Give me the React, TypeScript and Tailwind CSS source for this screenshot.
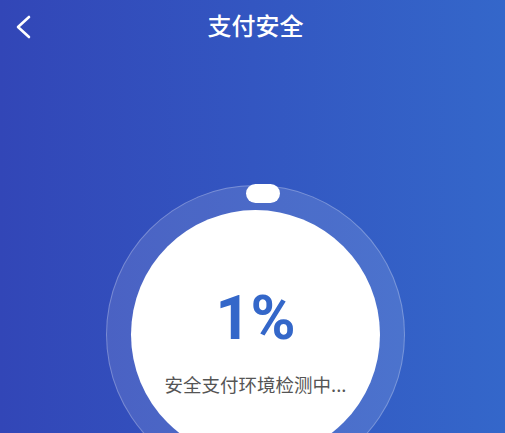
export default function App() {
  return (
    <div
      className="relative h-[433px] w-[505px] overflow-hidden bg-[linear-gradient(90deg,#3246b7_0%,#3356c1_50%,#3467ca_100%)]"
      style={{ fontFamily: '"Noto Sans CJK SC", "Noto Sans", sans-serif' }}
    >
      {/* Header */}
      <div className="relative flex h-[50px] items-center justify-center pl-[6px]">
        <button className="absolute left-[12px] top-[12px] p-[2px]">
          <svg width="20" height="26" viewBox="0 0 20 26" fill="none">
            <polyline
              points="15,3 4,13 15,23"
              stroke="white"
              strokeWidth="2.6"
              strokeLinecap="round"
              strokeLinejoin="round"
            />
          </svg>
        </button>
        <h1 className="text-[24px] font-medium leading-none text-white">支付安全</h1>
      </div>

      {/* Progress ring */}
      <div className="flex justify-center pl-[6px] pt-[135px]">
        <div className="relative h-[299px] w-[299px] rounded-full border border-white/25 bg-white/[0.12] p-[24px]">
          <div className="flex h-full w-full flex-col items-center rounded-full bg-white pt-[78px]">
            <div
              className="text-[61px] font-bold leading-none text-[#3467c9]"
              style={{ fontFamily: 'Roboto, "Noto Sans", sans-serif' }}
            >
              1%
            </div>
            <div className="mt-[26px] text-[18.5px] leading-none text-[#555]">安全支付环境检测中...</div>
          </div>
          {/* knob */}
          <div className="absolute left-[139px] top-[-2px] h-[19px] w-[34px] rounded-full bg-white" />
        </div>
      </div>
    </div>
  );
}
